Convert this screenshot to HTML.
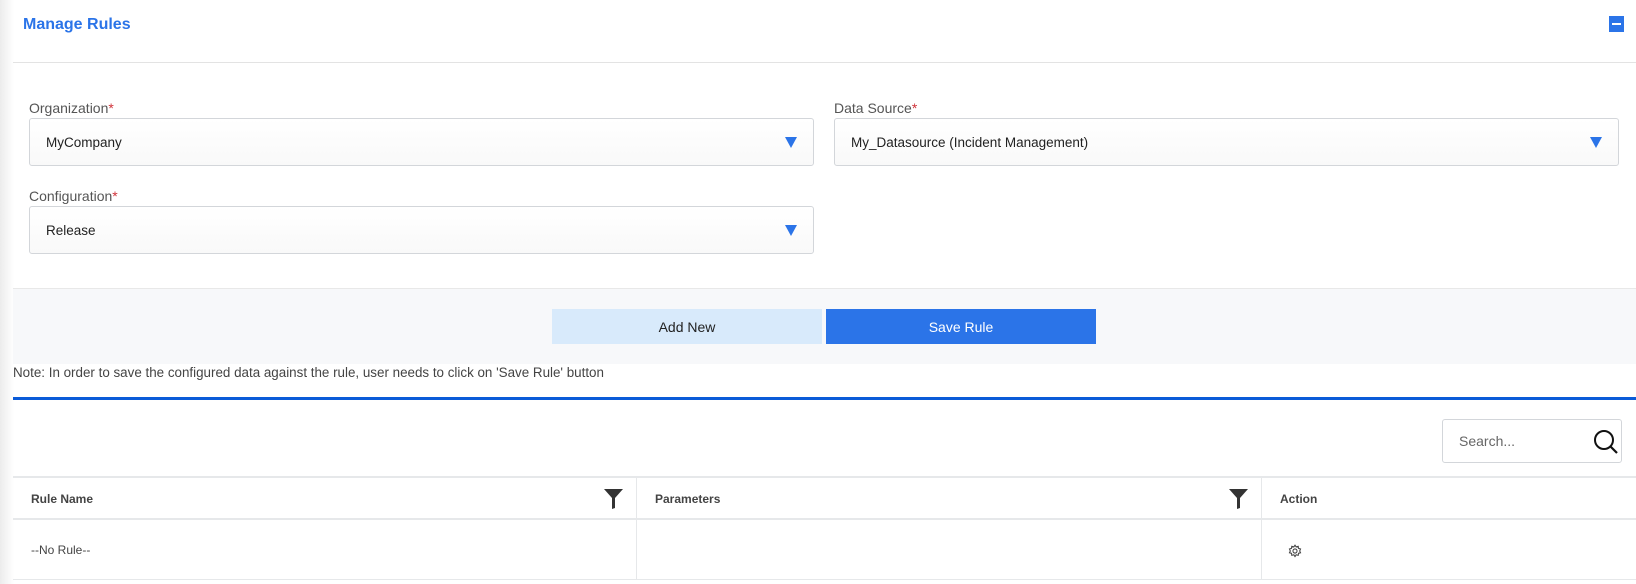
<!DOCTYPE html><html><head><style>
*{box-sizing:border-box;margin:0;padding:0}
body{width:1636px;height:584px;overflow:hidden;background:#fff;font-family:"Liberation Sans",sans-serif;position:relative}
.a{position:absolute}
.strip{left:0;top:0;width:14px;height:584px;background:linear-gradient(90deg,#ececec,#fff)}
.lbl{font-size:14px;color:#555}
.lbl b{color:#d0333a;font-weight:normal}
.sel{border:1px solid #d3d6da;border-radius:3px;background:linear-gradient(#fff,#f9f9f9);font-size:13.5px;color:#222;padding-left:16px;display:flex;align-items:center}
.tri{position:absolute;right:16px;top:50%;margin-top:-5px;width:0;height:0;border-left:6px solid transparent;border-right:6px solid transparent;border-top:11px solid #2b74e8}
.btn{display:flex;align-items:center;justify-content:center;font-size:14px}
.th{font-size:12px;font-weight:bold;color:#444}
</style></head><body>
<div class="a strip"></div>
<div class="a" style="left:23px;top:16px;font-size:16px;font-weight:bold;color:#2b74e8">Manage Rules</div>
<div class="a" style="left:1609px;top:16px;width:15px;height:16px;background:#2b74e8"><div class="a" style="left:3px;top:7px;width:9px;height:2px;background:#fff"></div></div>
<div class="a" style="left:13px;top:62px;width:1623px;height:1px;background:#e3e3e3"></div>
<div class="a lbl" style="left:29px;top:100px">Organization<b>*</b></div>
<div class="a sel" style="left:29px;top:118px;width:785px;height:48px">MyCompany<div class="tri"></div></div>
<div class="a lbl" style="left:834px;top:100px">Data Source<b>*</b></div>
<div class="a sel" style="left:834px;top:118px;width:785px;height:48px">My_Datasource (Incident Management)<div class="tri"></div></div>
<div class="a lbl" style="left:29px;top:188px">Configuration<b>*</b></div>
<div class="a sel" style="left:29px;top:206px;width:785px;height:48px">Release<div class="tri"></div></div>
<div class="a" style="left:13px;top:288px;width:1623px;height:76px;background:#f7f8fa;border-top:1px solid #e8e8e8"></div>
<div class="a btn" style="left:552px;top:309px;width:270px;height:35px;background:#d8eafb;color:#222">Add New</div>
<div class="a btn" style="left:826px;top:309px;width:270px;height:35px;background:#2b74e8;color:#fff">Save Rule</div>
<div class="a" style="left:13px;top:365px;font-size:13.4px;color:#444">Note: In order to save the configured data against the rule, user needs to click on 'Save Rule' button</div>
<div class="a" style="left:13px;top:397px;width:1623px;height:3px;background:#0a5bd8"></div>
<div class="a" style="left:1442px;top:419px;width:180px;height:44px;border:1px solid #d3d6da;border-radius:3px;font-size:14px;color:#666;padding:13px 0 0 16px">Search...
<svg class="a" style="right:2px;top:9px" width="26" height="26" viewBox="0 0 26 26"><circle cx="11" cy="11" r="9" fill="none" stroke="#111" stroke-width="2"/><line x1="17.5" y1="17.5" x2="24" y2="24" stroke="#111" stroke-width="2.2"/></svg></div>
<div class="a" style="left:13px;top:476px;width:1623px;height:2px;background:#e6e8ea"></div>
<div class="a" style="left:13px;top:518px;width:1623px;height:2px;background:#e6e8ea"></div>
<div class="a" style="left:13px;top:579px;width:1623px;height:1px;background:#e6e8ea"></div>
<div class="a" style="left:636px;top:478px;width:1px;height:101px;background:#e6e8ea"></div>
<div class="a" style="left:1261px;top:478px;width:1px;height:101px;background:#e6e8ea"></div>
<div class="a th" style="left:31px;top:492px">Rule Name</div>
<div class="a th" style="left:655px;top:492px">Parameters</div>
<div class="a th" style="left:1280px;top:492px">Action</div>
<svg class="a" style="left:604px;top:489px" width="19" height="20" viewBox="0 0 19 20"><path d="M0 0H19L11 9V19L8 20V9Z" fill="#333"/></svg>
<svg class="a" style="left:1229px;top:489px" width="19" height="20" viewBox="0 0 19 20"><path d="M0 0H19L11 9V19L8 20V9Z" fill="#333"/></svg>
<div class="a" style="left:31px;top:543px;font-size:12px;color:#444">--No Rule--</div>
<svg class="a" style="left:1288px;top:544px" width="14" height="14" viewBox="0 0 24 24"><path d="M12 2l2 3 3.5-1 .5 3.5 3.5 1-1.5 3.5 1.5 3-3.5 1-.5 3.5-3.5-1-2 3-2-3-3.5 1-.5-3.5-3.5-1 1.5-3-1.5-3.5 3.5-1 .5-3.5 3.5 1z" fill="none" stroke="#444" stroke-width="1.8"/><circle cx="12" cy="12" r="3.5" fill="none" stroke="#444" stroke-width="1.8"/></svg>
</body></html>
